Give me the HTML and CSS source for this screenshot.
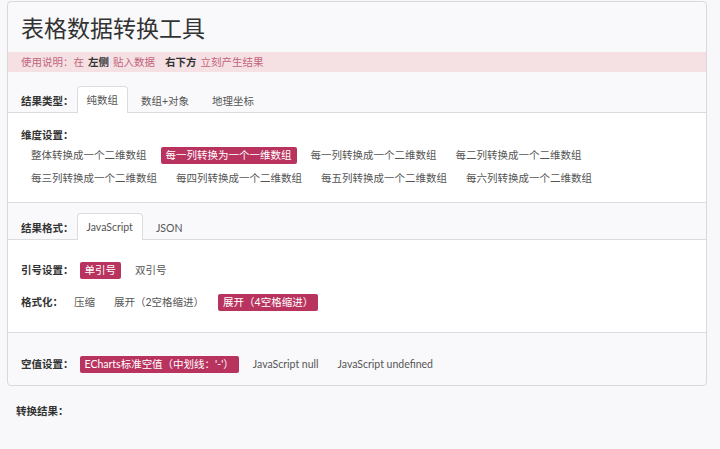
FILE: index.html
```html
<!DOCTYPE html>
<html lang="zh-CN">
<head>
<meta charset="utf-8">
<title>表格数据转换工具</title>
<link rel="stylesheet" href="styles.css">
</head>
<body>
<div class="card">
  <div class="title">表格数据转换工具</div>
  <div class="notice">使用说明：在<b class="k">左侧</b>贴入数据<b class="k k2">右下方</b>立刻产生结果</div>

  <div class="section">
    <div class="tabs">
      <span class="tab-label">结果类型：</span>
      <span class="tab active">纯数组</span>
      <span class="tab">数组+对象</span>
      <span class="tab">地理坐标</span>
    </div>
    <div class="panel panel-dim">
      <div class="label">维度设置：</div>
      <div class="opts">
        <span class="opt">整体转换成一个二维数组</span>
        <span class="opt on">每一列转换为一个一维数组</span>
        <span class="opt">每一列转换成一个二维数组</span>
        <span class="opt">每二列转换成一个二维数组</span>
        <span class="opt">每三列转换成一个二维数组</span>
        <span class="opt">每四列转换成一个二维数组</span>
        <span class="opt">每五列转换成一个二维数组</span>
        <span class="opt">每六列转换成一个二维数组</span>
      </div>
    </div>
  </div>

  <div class="section">
    <div class="tabs tabs2">
      <span class="tab-label">结果格式：</span>
      <span class="tab active">JavaScript</span>
      <span class="tab">JSON</span>
    </div>
    <div class="panel panel-fmt">
      <div class="row">
        <span class="label">引号设置：</span>
        <span class="opt on">单引号</span>
        <span class="opt">双引号</span>
      </div>
      <div class="row">
        <span class="label">格式化：</span>
        <span class="opt">压缩</span>
        <span class="opt">展开（2空格缩进）</span>
        <span class="opt on">展开（4空格缩进）</span>
      </div>
    </div>
  </div>

  <div class="section last">
    <div class="row">
      <span class="label">空值设置：</span>
      <span class="opt on">ECharts标准空值（中划线：'-'）</span>
      <span class="opt">JavaScript null</span>
      <span class="opt">JavaScript undefined</span>
    </div>
  </div>
</div>
<div class="result-label">转换结果：</div>
</body>
</html>
```

FILE: styles.css
```css
html, body {
  margin: 0;
  padding: 0;
  background: #f8f8fa;
}
body {
  font-family: "Lato", "Noto Sans CJK SC", "Noto Sans", sans-serif;
  font-size: 10.5px;
  color: #555;
}
.card {
  box-sizing: border-box;
  width: 700px;
  margin: 1px 0 0 7px;
  border: 1px solid #d9d9dc;
  border-radius: 4px;
  background: #f9f9fb;
  overflow: hidden;
}
.title {
  padding: 11px 13px 0 13px;
  height: 39px;
  font-size: 23px;
  line-height: 30px;
  color: #333;
}
.notice {
  height: 20px;
  line-height: 20px;
  padding: 0 13px;
  background: #f5e1e4;
  color: #c2647c;
  font-size: 10.5px;
}
.notice .k {
  color: #333;
  font-weight: bold;
  margin: 0 4px;
}
.notice .k2 {
  margin-left: 10px;
}
.section {
  border-bottom: 1px solid #dcdcdf;
}
.section.last {
  border-bottom: none;
  padding: 23px 13px 12px 13px;
}
.tabs {
  display: flex;
  align-items: flex-end;
  height: 25px;
  padding: 15px 13px 0 13px;
  border-bottom: 1px solid #dcdcdf;
}
.tabs2 {
  padding-top: 11px;
}
.tab-label {
  font-weight: bold;
  color: #333;
  line-height: 22px;
  margin-right: 3px;
}
.tab {
  display: block;
  height: 25px;
  line-height: 27px;
  padding: 0 9px;
  margin-right: 3px;
  margin-bottom: -1px;
  border: 1px solid transparent;
  border-bottom: none;
  border-radius: 4px 4px 0 0;
  color: #555;
}
.tab.active {
  background: #fff;
  border-color: #dcdcdf;
  height: 26px;
}
.panel {
  background: #fff;
}
.panel-dim {
  padding: 14px 13px 15px 13px;
}
.label {
  font-weight: bold;
  color: #333;
  line-height: 17px;
}
.panel-dim .label {
  height: 17px;
  margin-bottom: 3px;
}
.opts {
  display: flex;
  flex-wrap: wrap;
  row-gap: 6px;
  padding-left: 5px;
  width: 600px;
}
.opt {
  display: inline-block;
  height: 17px;
  line-height: 17px;
  padding: 0 5px;
  margin-right: 9px;
  border-radius: 2px;
  color: #555;
  white-space: nowrap;
}
.opt.on {
  background: #b8345f;
  color: #fff;
}
.panel-fmt {
  padding: 22px 13px 21px 13px;
  display: flex;
  flex-direction: column;
  gap: 15px;
}
.row {
  display: flex;
  align-items: center;
  height: 17px;
}
.row .label {
  margin-right: 6px;
}
.result-label {
  padding: 17px 0 0 16px;
  font-weight: bold;
  color: #333;
  line-height: 17px;
}
```
